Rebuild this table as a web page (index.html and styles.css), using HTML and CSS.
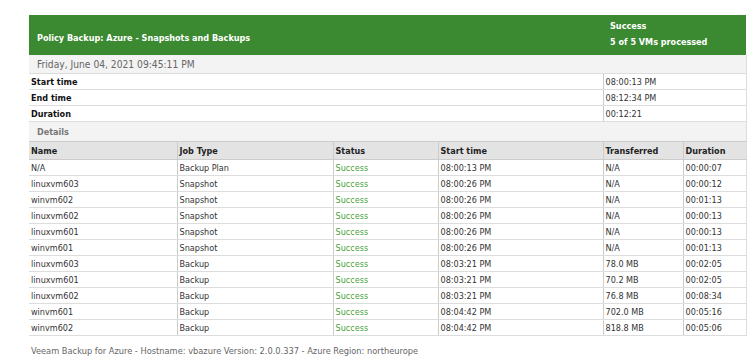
FILE: index.html
```html
<!DOCTYPE html>
<html lang="en">
<head>
    <meta charset="UTF-8">
    <title>Policy Backup: Azure - Snapshots and Backups</title>
    <link rel="stylesheet" href="styles.css">
</head>
<body>
    <table class="report">
        <colgroup>
            <col class="c-name">
            <col class="c-type">
            <col class="c-status">
            <col class="c-start">
            <col class="c-transferred">
            <col class="c-duration">
        </colgroup>
        <tr class="head">
            <td colspan="4" class="head-title">Policy Backup: Azure - Snapshots and Backups</td>
            <td colspan="2" class="head-result">Success<br>5 of 5 VMs processed</td>
        </tr>
        <tr class="date">
            <td colspan="6">Friday, June 04, 2021 09:45:11 PM</td>
        </tr>
        <tr class="summary">
            <td colspan="4" class="label">Start time</td>
            <td colspan="2" class="value">08:00:13 PM</td>
        </tr>
        <tr class="summary">
            <td colspan="4" class="label">End time</td>
            <td colspan="2" class="value">08:12:34 PM</td>
        </tr>
        <tr class="summary">
            <td colspan="4" class="label">Duration</td>
            <td colspan="2" class="value">00:12:21</td>
        </tr>
        <tr class="section">
            <td colspan="6">Details</td>
        </tr>
        <tr class="cols">
            <td>Name</td>
            <td>Job Type</td>
            <td>Status</td>
            <td>Start time</td>
            <td>Transferred</td>
            <td>Duration</td>
        </tr>
        <tr class="row">
            <td>N/A</td><td>Backup Plan</td><td class="ok">Success</td><td>08:00:13 PM</td><td>N/A</td><td>00:00:07</td>
        </tr>
        <tr class="row">
            <td>linuxvm603</td><td>Snapshot</td><td class="ok">Success</td><td>08:00:26 PM</td><td>N/A</td><td>00:00:12</td>
        </tr>
        <tr class="row">
            <td>winvm602</td><td>Snapshot</td><td class="ok">Success</td><td>08:00:26 PM</td><td>N/A</td><td>00:01:13</td>
        </tr>
        <tr class="row">
            <td>linuxvm602</td><td>Snapshot</td><td class="ok">Success</td><td>08:00:26 PM</td><td>N/A</td><td>00:00:13</td>
        </tr>
        <tr class="row">
            <td>linuxvm601</td><td>Snapshot</td><td class="ok">Success</td><td>08:00:26 PM</td><td>N/A</td><td>00:00:13</td>
        </tr>
        <tr class="row">
            <td>winvm601</td><td>Snapshot</td><td class="ok">Success</td><td>08:00:26 PM</td><td>N/A</td><td>00:01:13</td>
        </tr>
        <tr class="row">
            <td>linuxvm603</td><td>Backup</td><td class="ok">Success</td><td>08:03:21 PM</td><td>78.0 MB</td><td>00:02:05</td>
        </tr>
        <tr class="row">
            <td>linuxvm601</td><td>Backup</td><td class="ok">Success</td><td>08:03:21 PM</td><td>70.2 MB</td><td>00:02:05</td>
        </tr>
        <tr class="row">
            <td>linuxvm602</td><td>Backup</td><td class="ok">Success</td><td>08:03:21 PM</td><td>76.8 MB</td><td>00:08:34</td>
        </tr>
        <tr class="row">
            <td>winvm601</td><td>Backup</td><td class="ok">Success</td><td>08:04:42 PM</td><td>702.0 MB</td><td>00:05:16</td>
        </tr>
        <tr class="row">
            <td>winvm602</td><td>Backup</td><td class="ok">Success</td><td>08:04:42 PM</td><td>818.8 MB</td><td>00:05:06</td>
        </tr>
    </table>

    <p class="footer">Veeam Backup for Azure - Hostname: vbazure Version: 2.0.0.337 - Azure Region: northeurope</p>
</body>
</html>
```

FILE: styles.css
```css
body {
    margin: 15px 0 0 29px;
    font-family: Tahoma, "DejaVu Sans Condensed", "DejaVu Sans", sans-serif;
    font-size: 9px;
    color: #333;
    background: #fff;
}
.report {
    width: 717px;
    border-collapse: collapse;
    table-layout: fixed;
}
.c-name { width: 148px; }
.c-type { width: 156px; }
.c-status { width: 105px; }
.c-start { width: 165px; }
.c-transferred { width: 80px; }
.c-duration { width: 63px; }
.report td {
    padding: 0 0 0 2px;
    white-space: nowrap;
    overflow: hidden;
    vertical-align: middle;
}
.head td {
    background-color: #3b8a31;
    color: #fff;
    font-weight: bold;
    font-size: 9px;
    height: 40px;
    box-sizing: border-box;
}
.head-title {
    padding: 5px 0 0 8px !important;
}
.head-result {
    line-height: 16px;
    padding: 0 0 3px 7px !important;
}
.date td {
    background-color: #f3f3f3;
    color: #666;
    font-size: 10.2px;
    height: 18px;
    padding-left: 8px;
    border-bottom: 1px solid #ddd;
    border-right: 1px solid #ddd;
}
.summary td {
    height: 15px;
    border-bottom: 1px solid #ddd;
}
.summary .label {
    font-weight: bold;
    color: #111;
}
.summary .value {
    border-left: 1px solid #ccc;
    border-right: 1px solid #ddd;
}
.section td {
    background-color: #f3f3f3;
    color: #777;
    font-weight: bold;
    height: 19px;
    padding-left: 8px;
    border-bottom: 1px solid #ccc;
    border-right: 1px solid #ddd;
}
.cols td {
    background-color: #e3e3e3;
    font-weight: bold;
    color: #222;
    height: 17px;
    border-bottom: 1px solid #ccc;
}
.cols td + td,
.row td + td {
    border-left: 1px solid #ccc;
}
.row td {
    height: 15px;
    border-bottom: 1px solid #ddd;
}
.row td:last-child,
.cols td:last-child {
    border-right: 1px solid #ddd;
}
.ok {
    color: #4a9f3a;
}
.footer {
    margin: 9px 0 0 2px;
    font-size: 9.2px;
    color: #666;
}
```
